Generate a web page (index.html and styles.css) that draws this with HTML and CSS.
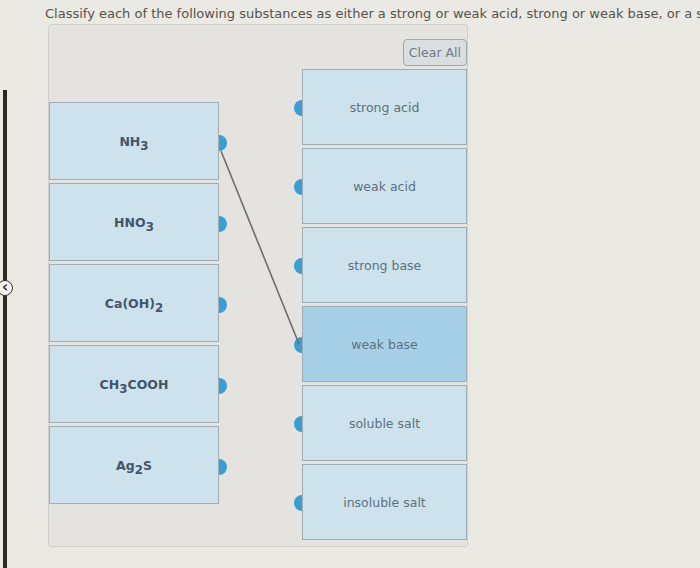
FILE: index.html
```html
<!DOCTYPE html>
<html lang="en">
<head>
  <meta charset="UTF-8">
  <meta name="viewport" content="width=device-width, initial-scale=1.0">
  <title>Classify Substances</title>
  <link rel="stylesheet" href="styles.css">
</head>
<body>
  <span class="edge-handle">&lsaquo;</span>

  <p class="prompt">Classify each of the following substances as either a strong or weak acid, strong or weak base, or a soluble or insoluble salt.</p>

  <div class="board">
    <!-- Barra com o botão de limpar -->
    <div class="toolbar">
      <button class="clear-btn">Clear All</button>
    </div>

    <div class="columns">
      <!-- Substâncias -->
      <div class="col col-terms">
        <div class="item term"><span>NH<sub>3</sub></span></div>
        <div class="item term"><span>HNO<sub>3</sub></span></div>
        <div class="item term"><span>Ca(OH)<sub>2</sub></span></div>
        <div class="item term"><span>CH<sub>3</sub>COOH</span></div>
        <div class="item term"><span>Ag<sub>2</sub>S</span></div>
      </div>

      <!-- Categorias -->
      <div class="col col-targets">
        <div class="item target">strong acid</div>
        <div class="item target">weak acid</div>
        <div class="item target">strong base</div>
        <div class="item target active">weak base</div>
        <div class="item target">soluble salt</div>
        <div class="item target">insoluble salt</div>
      </div>
    </div>

    <!-- Ligações feitas pelo usuário -->
    <svg class="links" width="420" height="520" viewBox="0 0 420 520">
      <line x1="172" y1="126" x2="250" y2="319" stroke="#6d6d6a" stroke-width="1.6"/>
    </svg>
  </div>
</body>
</html>
```

FILE: styles.css
```css
body {
  margin: 0;
  background-color: #ebe9e3;
  font-family: 'DejaVu Sans', Verdana, sans-serif;
  overflow: hidden;
  position: relative;
  min-height: 568px;
}

/* Borda escura do lado esquerdo */
body::before {
  content: '';
  position: absolute;
  left: 3px;
  top: 90px;
  bottom: 0;
  width: 4px;
  background-color: #2c2724;
}

.edge-handle {
  position: absolute;
  left: -3px;
  top: 280px;
  width: 14px;
  height: 14px;
  border: 1.5px solid #3a3532;
  border-radius: 50%;
  background-color: #f4f3f0;
  color: #3a3532;
  font-size: 15px;
  line-height: 12px;
  text-align: center;
  font-weight: bold;
  z-index: 2;
}

.prompt {
  margin: 0;
  padding: 6px 0 0 45px;
  font-size: 13px;
  line-height: 16px;
  color: #555350;
  white-space: nowrap;
  overflow: hidden;
}

.board {
  position: relative;
  margin: 2px 0 0 48px;
  width: 420px;
  box-sizing: border-box;
  padding: 14px 0 6px 0;
  background-color: #e4e3df;
  border: 1px solid #d0cfcb;
  border-radius: 3px;
}

.toolbar {
  display: flex;
  justify-content: flex-end;
  margin-bottom: 3px;
}

.clear-btn {
  height: 27px;
  padding: 0 5px;
  font-family: 'DejaVu Sans', Verdana, sans-serif;
  font-size: 12.5px;
  color: #6f7a84;
  background-color: #d9dee1;
  border: 1px solid #9fa8ae;
  border-radius: 4px;
}

.columns {
  display: flex;
  justify-content: space-between;
}

.col {
  display: flex;
  flex-direction: column;
}

.col-terms {
  width: 170px;
  margin-top: 33px;
  gap: 3px;
}

.col-targets {
  width: 165px;
  gap: 3px;
}

.item {
  position: relative;
  box-sizing: border-box;
  display: flex;
  align-items: center;
  justify-content: center;
  background-color: #cde2ec;
  border: 1px solid #9eadb6;
  font-size: 12.5px;
}

.term {
  height: 78px;
  font-weight: bold;
  color: #44546a;
}

.term sub {
  font-size: 0.95em;
  vertical-align: -4px;
  line-height: 0;
}

.target {
  height: 76px;
  color: #5e7080;
}

.target.active {
  background-color: #a5d0e8;
}

/* Pontos de conexão */
.term::after,
.target::before {
  content: '';
  position: absolute;
  top: 50%;
  width: 8px;
  height: 16px;
  margin-top: -6px;
  background-color: #3b9ed0;
}

.term::after {
  right: -9px;
  border-radius: 0 8px 8px 0;
}

.target::before {
  left: -9px;
  margin-top: -7px;
  border-radius: 8px 0 0 8px;
}

.links {
  position: absolute;
  left: 0;
  top: 0;
  pointer-events: none;
}
```
